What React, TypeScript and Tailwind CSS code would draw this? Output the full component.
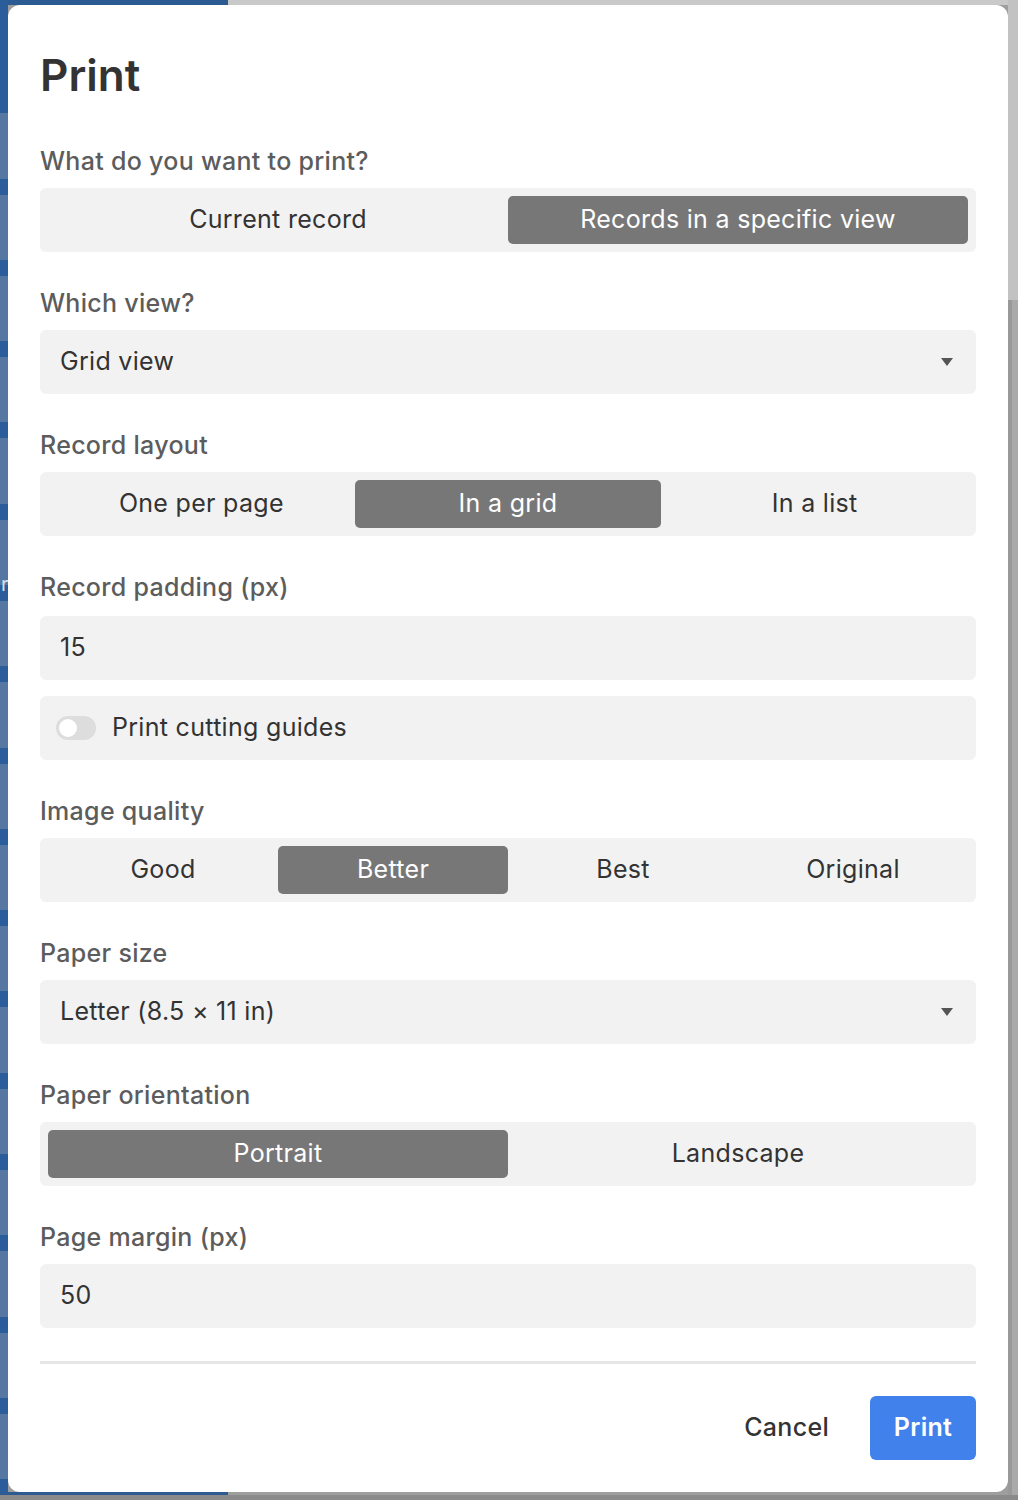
import React from "react";

const font = { fontFamily: "Inter, 'Noto Sans', sans-serif" };

function Label({ children }: { children: React.ReactNode }) {
  return (
    <div className="mt-[35px] mb-[11px] h-[32px] leading-[32px] text-[25px] font-medium text-[#5c5c5c] tracking-[0.3px]">
      {children}
    </div>
  );
}

function Segmented({ options, selected }: { options: string[]; selected: number }) {
  return (
    <div className="flex h-[64px] rounded-[6px] bg-[#f2f2f2] p-[8px]">
      {options.map((o, i) => (
        <div
          key={o}
          className={
            "flex flex-1 items-center justify-center rounded-[5px] text-[25px] tracking-[0.3px] " +
            (i === selected ? "bg-[#777777] text-white" : "text-[#333333]")
          }
        >
          {o}
        </div>
      ))}
    </div>
  );
}

function Select({ value }: { value: string }) {
  return (
    <div className="flex h-[64px] items-center justify-between rounded-[6px] bg-[#f2f2f2] pl-[20px] pr-[22px] text-[25px] text-[#333333] tracking-[0.3px]">
      <span>{value}</span>
      <svg width="14" height="10" viewBox="0 0 14 10">
        <path d="M1 1 L13 1 L7 9 Z" fill="#555555" />
      </svg>
    </div>
  );
}

function Input({ value, extra }: { value: string; extra?: string }) {
  return (
    <div
      className={
        "flex h-[64px] items-center rounded-[6px] bg-[#f2f2f2] px-[20px] text-[25px] text-[#333333] tracking-[0.3px] " +
        (extra ?? "")
      }
    >
      {value}
    </div>
  );
}

export default function App() {
  const stripes = Array.from({ length: 17 });
  return (
    <div className="relative h-[1500px] w-[1018px] overflow-hidden bg-[#9e9e9e]" style={font}>
      {/* background hints */}
      <div className="absolute left-0 top-0 h-[5px] w-[228px] bg-[#2b5b91]" />
      <div className="absolute left-[228px] top-0 h-[5px] w-[790px] bg-[#c9c9c9]" />
      <div className="absolute left-0 top-0 flex h-[1495px] w-[8px] flex-col bg-[#2b5d9b]">
        <div className="h-[118px]" />
        {stripes.map((_, i) => (
          <div key={i} className="mb-[16px] h-[68px] bg-[#5577a1]" />
        ))}
      </div>
      <div className="absolute left-[1px] top-[574px] text-[20px] leading-[20px] text-[#d8dde6]">r</div>
      <div className="absolute left-0 top-[1492px] h-[3px] w-[228px] bg-[#2b5b91]" />
      <div className="absolute left-0 top-[1495px] h-[5px] w-[1018px] bg-[#8a8a8a]" />
      <div className="absolute left-[1008px] top-0 h-[300px] w-[10px] bg-[#c2c2c2]" />
      <div className="absolute left-[1008px] top-[300px] h-[1195px] w-[4px] bg-[#999999]" />
      <div className="absolute left-[1012px] top-[300px] h-[1195px] w-[6px] bg-[#a9a9a9]" />

      {/* modal */}
      <div className="absolute left-[8px] top-[5px] flex h-[1487px] w-[1000px] flex-col rounded-[12px] bg-white px-[32px] pt-[32px]">
        <div className="h-[76px] leading-[76px] text-[44px] font-semibold text-[#333333]">Print</div>
        <div className="mt-[-3px]" />
        <Label>What do you want to print?</Label>
        <Segmented options={["Current record", "Records in a specific view"]} selected={1} />
        <Label>Which view?</Label>
        <Select value="Grid view" />
        <Label>Record layout</Label>
        <Segmented options={["One per page", "In a grid", "In a list"]} selected={1} />
        <Label>Record padding (px)</Label>
        <Input value="15" extra="mt-[2px]" />
        <div className="mt-[16px] flex h-[64px] items-center gap-[16px] rounded-[6px] bg-[#f2f2f2] px-[16px] text-[25px] text-[#333333] tracking-[0.3px]">
          <div className="flex h-[24px] w-[40px] items-center rounded-full bg-[#dddddd] px-[3px]">
            <div className="h-[18px] w-[18px] rounded-full bg-white" />
          </div>
          <span>Print cutting guides</span>
        </div>
        <Label>Image quality</Label>
        <Segmented options={["Good", "Better", "Best", "Original"]} selected={1} />
        <Label>Paper size</Label>
        <Select value="Letter (8.5 × 11 in)" />
        <Label>Paper orientation</Label>
        <Segmented options={["Portrait", "Landscape"]} selected={0} />
        <Label>Page margin (px)</Label>
        <Input value="50" />
        <div className="mt-[33px] h-[3px] bg-[#e6e6e6]" />
        <div className="mt-[32px] flex items-center justify-end">
          <div className="mr-[41px] text-[25px] font-medium text-[#333333] tracking-[0.3px]">Cancel</div>
          <div className="flex h-[64px] w-[106px] items-center justify-center rounded-[6px] bg-[#4081ec] text-[25px] font-semibold text-white tracking-[0.3px]">
            Print
          </div>
        </div>
      </div>
    </div>
  );
}
